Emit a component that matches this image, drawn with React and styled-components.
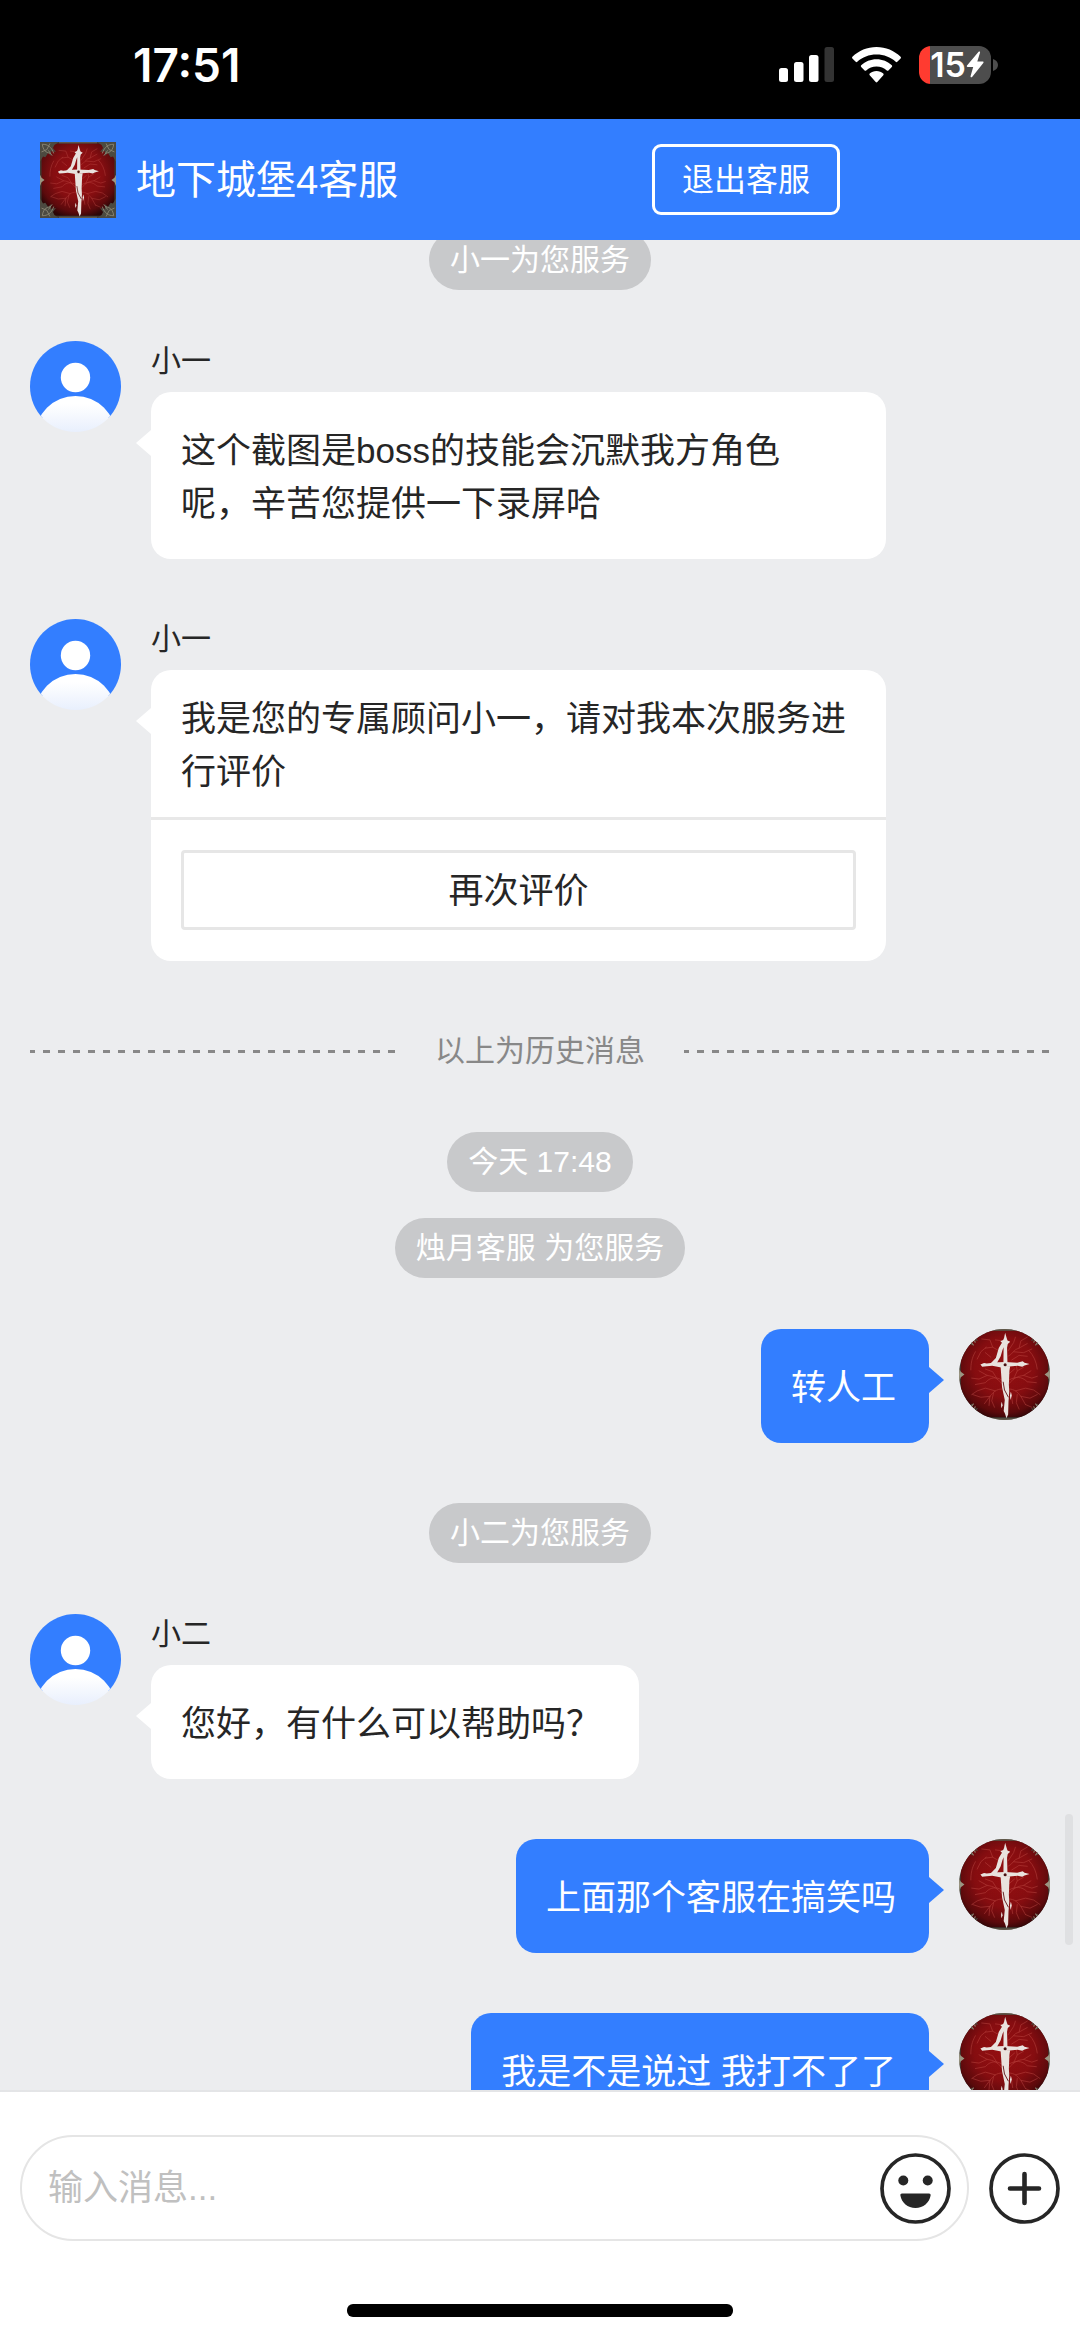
import React, { useState } from 'react';
import styled, { createGlobalStyle } from 'styled-components';


const GlobalStyle = createGlobalStyle`
  * {
    box-sizing: border-box;
  }

  body {
    margin: 0;
    background-color: #ffffff;
    color: #262626;
    font-family: 'Liberation Sans', 'Noto Sans CJK SC', sans-serif;
  }

  button, input {
    font-family: inherit;
    color: inherit;
  }
`

const StyledApp = styled.div`
  display: flex;
  flex-direction: column;
  height: 100vh;
  overflow: hidden;
`

/* status bar */

const StyledStatusBar = styled.div`
  display: flex;
  justify-content: space-between;
  align-items: center;
  flex: none;
  height: 119px;
  padding: 10px 82px 0 133px;
  background-color: #000000;
  color: #ffffff;
  font-family: 'Inter', sans-serif;
`

const Clock = styled.span`
  font-size: 46px;
  line-height: 54px;
  font-weight: 600;
`

const StatusIcons = styled.div`
  display: flex;
  align-items: center;
  gap: 18px;
`

const Battery = styled.span`
  display: flex;
  align-items: center;
  justify-content: flex-end;
  width: 72px;
  height: 38px;
  padding-right: 7px;
  border-radius: 12px;
  background: linear-gradient(to right, #ff3b30 11px, #4d4d4d 11px);
  font-size: 34px;
  line-height: 38px;
  font-weight: 600;
`

const BatteryWrap = styled.div`
  display: flex;
  align-items: center;
  gap: 2px;
`

/* header */

const StyledHeader = styled.header`
  display: flex;
  justify-content: space-between;
  align-items: center;
  flex: none;
  height: 121px;
  padding: 0 240px 0 40px;
  background-color: #337eff;
  color: #ffffff;
`

const Brand = styled.div`
  display: flex;
  align-items: center;
  gap: 20px;
`

const Title = styled.h1`
  margin: 0;
  font-size: 40px;
  line-height: 60px;
  font-weight: 400;
`

const ExitButton = styled.button`
  height: 71px;
  padding: 0 27px;
  border: 3px solid #ffffff;
  border-radius: 9px;
  background: transparent;
  font-size: 32px;
  line-height: 48px;
  cursor: pointer;
`

/* chat */

const StyledChat = styled.main`
  position: relative;
  flex: 1;
  min-height: 0;
  overflow: hidden;
  background-color: #ecedef;
`

const ScrollThumb = styled.div`
  position: absolute;
  right: 7px;
  bottom: 145px;
  width: 8px;
  height: 131px;
  border-radius: 4px;
  background-color: #dfe0e2;
`

const Thread = styled.div`
  display: flex;
  flex-direction: column;
  margin-top: -10px;
  padding: 0 30px;
`

const Notices = styled.div`
  display: flex;
  flex-direction: column;
  align-items: center;
  gap: 26px;
  margin-bottom: 51px;
`

const Notice = styled.p`
  margin: 0;
  padding: 0 21px;
  border-radius: 30px;
  background-color: #c8c9cb;
  color: #ffffff;
  font-size: 30px;
  line-height: 60px;
`

const HistoryDivider = styled.div`
  display: flex;
  align-items: center;
  gap: 39px;
  margin-bottom: 51px;
  color: #888888;
  font-size: 30px;
  line-height: 60px;

  &::before,
  &::after {
    content: '';
    flex: 1;
    height: 3px;
    background: repeating-linear-gradient(to right, #888888 0 5px, transparent 5px 13px, #888888 13px 15px);
  }
`

const MessageRow = styled.div`
  display: flex;
  flex-direction: ${({ $mine }) => ($mine ? 'row-reverse' : 'row')};
  align-items: flex-start;
  gap: 30px;
  margin-bottom: 60px;
`

const Avatar = styled.div`
  flex: none;
  width: 91px;
  height: 91px;
  border-radius: 50%;
  overflow: hidden;

  svg {
    display: block;
  }
`

const MessageBody = styled.div`
  max-width: 735px;
`

const Sender = styled.div`
  margin-bottom: 11px;
  font-size: 30px;
  line-height: 40px;
`

const Bubble = styled.div`
  position: relative;
  width: fit-content;
  border-radius: 20px;
  background-color: ${({ $mine }) => ($mine ? '#337eff' : '#ffffff')};
  color: ${({ $mine }) => ($mine ? '#ffffff' : '#262626')};
  font-size: 35px;
  line-height: 53px;

  &::before {
    content: '';
    position: absolute;
    top: 38px;
    ${({ $mine }) => ($mine ? 'left: 100%;' : 'right: 100%;')}
    width: 15px;
    height: 26px;
    background-color: inherit;
    clip-path: ${({ $mine }) => ($mine ? 'polygon(0 0, 100% 50%, 0 100%)' : 'polygon(100% 0, 0 50%, 100% 100%)')};
  }
`

const BubbleText = styled.p`
  margin: 0;
  padding: 32px ${({ $mine }) => ($mine ? '33px' : '38px')} 29px 30px;
`

const RateText = styled.p`
  margin: 0;
  padding: 22px 38px 19px 30px;
  border-bottom: 3px solid #e8e8e8;
`

const RateAction = styled.div`
  padding: 30px 30px 31px;
`

const RateButton = styled.button`
  display: block;
  width: 100%;
  height: 80px;
  padding: 0;
  border: 3px solid #e6e6e6;
  border-radius: 4px;
  background-color: #ffffff;
  font-size: 35px;
  line-height: 53px;
  cursor: pointer;
`

/* composer */

const StyledComposer = styled.form`
  display: flex;
  align-items: center;
  gap: 20px;
  flex: none;
  padding: 43px 20px 63px;
  border-top: 2px solid #e4e5e7;
  background-color: #ffffff;
`

const InputBox = styled.div`
  display: flex;
  align-items: center;
  flex: 1;
  height: 106px;
  padding: 0 16px 0 26px;
  border: 2px solid #e5e5e5;
  border-radius: 53px;
`

const MessageInput = styled.input`
  flex: 1;
  min-width: 0;
  height: 60px;
  padding: 0;
  border: none;
  outline: none;
  background: transparent;
  font-size: 35px;

  &::placeholder {
    color: #c0c0c0;
    opacity: 1;
  }
`

const IconButton = styled.button`
  flex: none;
  width: 71px;
  height: 71px;
  padding: 0;
  border: none;
  background: transparent;
  cursor: pointer;

  svg {
    display: block;
  }
`

const HomeBar = styled.div`
  flex: none;
  padding-bottom: 20px;

  &::before {
    content: '';
    display: block;
    width: 386px;
    height: 13px;
    margin: 0 auto;
    border-radius: 6px;
    background-color: #000000;
  }
`


const SignalIcon = () => (
    <svg width="55" height="36" viewBox="0 0 55 36" fill="#ffffff">
        <rect x="0" y="21" width="9" height="14" rx="2.5" />
        <rect x="15" y="15" width="9.5" height="20" rx="2.5" />
        <rect x="30" y="8" width="9.5" height="27" rx="2.5" />
        <rect x="45.5" y="0" width="9.5" height="35" rx="2.5" fill="#333333" />
    </svg>
)

const WifiIcon = () => (
    <svg width="49" height="36" viewBox="0 0 49 36" fill="#ffffff">
        <path d="M24.5 0C15.2 0 6.700 3.700.4 9.700c-.5.500-.5 1.200 0 1.700l3.300 3.400c.4.500 1.100.500 1.600 0C10.300 10.300 17 7.600 24.500 7.600s14.200 2.700 19.200 7.200c.5.500 1.200.500 1.600 0l3.300-3.400c.5-.5.500-1.200 0-1.700C42.300 3.700 33.800 0 24.500 0z" />
        <path d="M24.500 12.300c-5.900 0-11.300 2.300-15.300 6-.5.500-.5 1.200 0 1.700l3.400 3.400c.4.400 1.100.400 1.600 0 2.700-2.500 6.300-4 10.300-4s7.600 1.500 10.300 4c.5.400 1.200.400 1.600 0l3.400-3.400c.5-.5.500-1.200 0-1.700-4-3.700-9.400-6-15.300-6z" />
        <path d="M24.500 24c-2.600 0-5 1-6.800 2.600-.5.500-.5 1.100 0 1.600l6 6.900c.5.500 1.100.500 1.600 0l6-6.900c.5-.5.500-1.100 0-1.600C29.500 25 27.100 24 24.500 24z" />
    </svg>
)

const BoltIcon = () => (
    <svg width="18" height="27" viewBox="0 0 18 27" fill="#ffffff">
        <path d="M12.600.8 1 14.600c-.5.700-.1 1.400.6 1.400h5.600L4.600 25.100c-.3 1.100.8 1.700 1.500.8L17.300 12c.5-.7.200-1.400-.6-1.400h-5.400L14 1.700c.4-1.200-.7-1.700-1.400-.9z" />
    </svg>
)

const BatteryNub = () => (
    <svg width="5" height="12" viewBox="0 0 5 12" fill="#4d4d4d">
        <path d="M0 0c3 .8 5 3.200 5 6s-2 5.200-5 6z" />
    </svg>
)

const CORNERS = ['', 'translate(100 0) scale(-1 1)', 'translate(0 100) scale(1 -1)', 'translate(100 100) scale(-1 -1)']

const GameIcon = ({ size }) => (
    <svg width={size} height={size} viewBox="0 0 100 100">
        <defs>
            <radialGradient id="gameRed" cx="50%" cy="42%" r="62%">
                <stop offset="0" stopColor="#960f12" />
                <stop offset="0.55" stopColor="#860e11" />
                <stop offset="0.85" stopColor="#5c0a0c" />
                <stop offset="1" stopColor="#2c0607" />
            </radialGradient>
        </defs>
        <rect width="100" height="100" fill="#3d3a33" />
        <path d="M18 2h64l6 10 10 7v62l-9 7-7 9H18l-7-9-9-7V19l10-7z" fill="url(#gameRed)" />
        {/* veins */}
        <g fill="none" stroke="#c4504a" strokeWidth="0.8" strokeLinecap="round" opacity="0.6">
            <path d="M55 60c5-6 9-8 16-9l8-5M71 51l9 3 6-2M60 55l4-9 7-4M64 46l-1-6" />
            <path d="M55 66c6 0 9 3 13 8l5 9M68 74l10 2 8-4M62 68l11-3 9 2 7 5M73 83l7 3" />
            <path d="M55 56c7-4 14-4 20 2l10 1M54 50l7-6" />
            <path d="M47 60c-5-6-9-8-16-9l-9-5M31 51l-9 4-8-1M42 55l-5-8-8-3" />
            <path d="M47 66c-6 0-9 3-13 8l-6 8M34 74l-10 1-9-3M40 68l-11-3-9 3-6 4M34 74l-1 10" />
            <path d="M47 56c-6-4-13-3-18 3l-11 2M38 70l-2 9 3 7M64 72l-1 9 3 7M57 70l2 12" />
            <path d="M54 30c5-2 6-8 12-9l9-5M66 21l2-8 7-4M60 25l11 1 9-4M54 24l6-9 2-6" />
            <path d="M44 24l-7-4-8 1M37 20l-3-8-9-1M40 12l8 1M30 20l-6 5-4 8M35 31l-6-5" />
            <path d="M77 24c5 5 8 12 9 20M18 25c-4 7-5 13-5 20M58 34l8-5 9 1" />
        </g>
        {/* frame ornaments */}
        {CORNERS.map((transform) => (
            <g key={transform} transform={transform}>
                <path d="M0 0h25l-6 4-2 4 4 5-6-1-1 6-3-4-4 6-3-1-4 7z" fill="#4c4a40" />
                <path d="M3 3c7 0 12 3 15 12M3 3c1 7 4 11 11 12M2 13l7-3 4-8M11 11l5 7" fill="none" stroke="#8b8673" strokeWidth="1.200" />
            </g>
        ))}
        <path d="M0 43l2 4 4 3-4 3-2 5zM100 43l-2 4-4 3 4 3 2 5z" fill="#9a9682" />
        <path d="M25 99h50M25 1h50" stroke="#6d6250" strokeWidth="1.500" />
        {/* sword */}
        <g fill="#e9e2de">
            <path d="M50.700 4l1.700 6 .9 2.500 3 1.500-2.700 2.500-.8 4 .5 18h-4.500L49 20 47.800 23l-2 7-4.300 7.500-9 2.500 8-8 3.200-11 3.500-6-1.700-1.500 3-1.500 1-2z" />
            <path d="M23.500 39l4-1.700 3 .5 12-1.200 8.500-.3 13 .7 6-1.500 2 1.500 5.500 1.500-5.500 1.500-2.500 1.500-5-1.200-9 .9-9 1-10-1.700-6 .5-5 .5z" />
            <path d="M45.700 41h10.500l-.8 5-.6 15 .4 8-.8 11-.4 14-1.900 4-1.500-5-1.500-3 1.200-12-3-14z" />
            <path d="M57 69l1 4-1.500 5-.5-5zM47 80l1 4-1.500 3-.3-4z" />
        </g>
        <path d="M48.500 58l1.500 9 4.300 8" fill="none" stroke="#5c1214" strokeWidth="1" />
        <circle cx="50.700" cy="39.300" r="1.700" fill="#4a1012" />
    </svg>
)

const AgentIcon = () => (
    <svg width="91" height="91" viewBox="0 0 91 91">
        <defs>
            <linearGradient id="agentBody" x1="0" y1="0" x2="0" y2="1">
                <stop offset="0.100" stopColor="#ffffff" />
                <stop offset="0.450" stopColor="#e8effd" />
            </linearGradient>
        </defs>
        <rect width="91" height="77" fill="#337eff" />
        <circle cx="45.500" cy="36.500" r="14.700" fill="#ffffff" />
        <circle cx="45.500" cy="95.400" r="40.400" fill="url(#agentBody)" />
    </svg>
)

const SmileIcon = () => (
    <svg width="71" height="71" viewBox="0 0 71 71" fill="#262626">
        <circle cx="35.500" cy="35.500" r="33.500" fill="none" stroke="#262626" strokeWidth="3.700" />
        <circle cx="23.300" cy="27.500" r="5" />
        <circle cx="47.700" cy="27.500" r="5" />
        <path d="M22 40.500h27c1.200 0 1.800.8 1.600 2C49.500 49.500 43.300 55 35.500 55s-14-5.500-15.100-12.500c-.2-1.200.4-2 1.600-2z" />
    </svg>
)

const PlusIcon = () => (
    <svg width="71" height="71" viewBox="0 0 71 71" fill="none" stroke="#262626" strokeLinecap="round">
        <circle cx="35.500" cy="35.500" r="33.500" strokeWidth="3.700" />
        <path d="M35.500 21v29M21 35.500h29" strokeWidth="4.600" />
    </svg>
)


const AgentMessage = ({ name, children }) => (
    <MessageRow>
        <Avatar><AgentIcon /></Avatar>
        <MessageBody>
            <Sender>{name}</Sender>
            <Bubble>{children}</Bubble>
        </MessageBody>
    </MessageRow>
)

const MyMessage = ({ children }) => (
    <MessageRow $mine>
        <Avatar><GameIcon size={91} /></Avatar>
        <MessageBody>
            <Bubble $mine>
                <BubbleText $mine>{children}</BubbleText>
            </Bubble>
        </MessageBody>
    </MessageRow>
)

const App = () => {
    const [message, setMessage] = useState('');

    const handleSubmit = (e) => {
        e.preventDefault();
        setMessage('');
    }

    return (
        <StyledApp>
            <GlobalStyle />
            <StyledStatusBar>
                <Clock>17:51</Clock>
                <StatusIcons>
                    <SignalIcon />
                    <WifiIcon />
                    <BatteryWrap>
                        <Battery>15<BoltIcon /></Battery>
                        <BatteryNub />
                    </BatteryWrap>
                </StatusIcons>
            </StyledStatusBar>

            <StyledHeader>
                <Brand>
                    <GameIcon size={76} />
                    <Title>地下城堡4客服</Title>
                </Brand>
                <ExitButton type="button">退出客服</ExitButton>
            </StyledHeader>

            <StyledChat>
                <Thread>
                    <Notices>
                        <Notice>小一为您服务</Notice>
                    </Notices>
                    <AgentMessage name="小一">
                        <BubbleText>这个截图是boss的技能会沉默我方角色呢，辛苦您提供一下录屏哈</BubbleText>
                    </AgentMessage>
                    <AgentMessage name="小一">
                        <RateText>我是您的专属顾问小一，请对我本次服务进行评价</RateText>
                        <RateAction>
                            <RateButton type="button">再次评价</RateButton>
                        </RateAction>
                    </AgentMessage>
                    <HistoryDivider>以上为历史消息</HistoryDivider>
                    <Notices>
                        <Notice>今天 17:48</Notice>
                        <Notice>烛月客服 为您服务</Notice>
                    </Notices>
                    <MyMessage>转人工</MyMessage>
                    <Notices>
                        <Notice>小二为您服务</Notice>
                    </Notices>
                    <AgentMessage name="小二">
                        <BubbleText>您好，有什么可以帮助吗？</BubbleText>
                    </AgentMessage>
                    <MyMessage>上面那个客服在搞笑吗</MyMessage>
                    <MyMessage>我是不是说过 我打不了了</MyMessage>
                </Thread>
                <ScrollThumb />
            </StyledChat>

            <StyledComposer onSubmit={handleSubmit}>
                <InputBox>
                    <MessageInput
                        aria-label="输入消息"
                        placeholder="输入消息..."
                        value={message}
                        onChange={(e) => setMessage(e.target.value)}
                    />
                    <IconButton type="button" aria-label="表情"><SmileIcon /></IconButton>
                </InputBox>
                <IconButton type="button" aria-label="更多"><PlusIcon /></IconButton>
            </StyledComposer>
            <HomeBar />
        </StyledApp>
    );
};

export default App;
